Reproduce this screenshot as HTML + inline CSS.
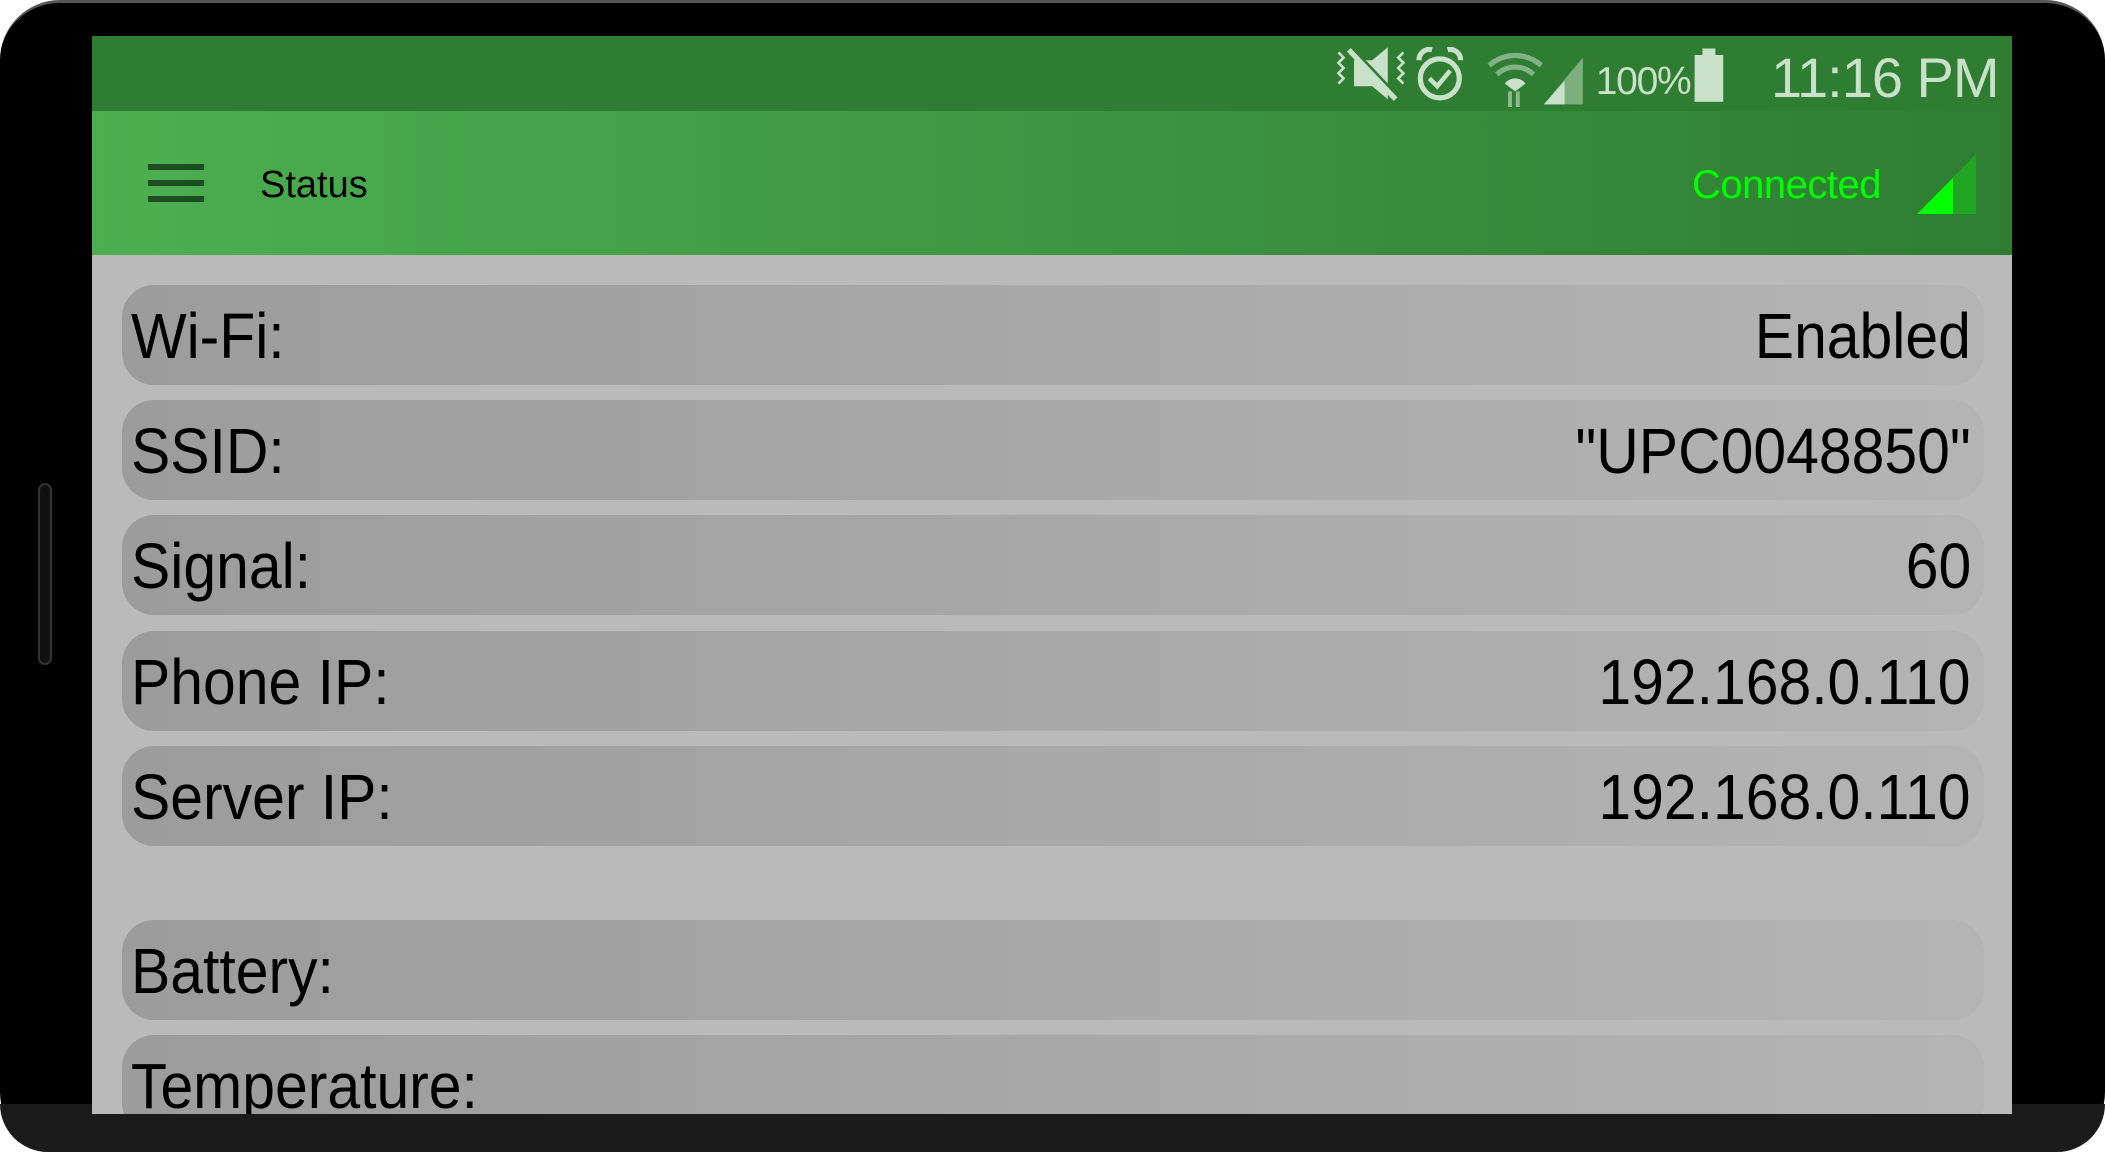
<!DOCTYPE html>
<html><head><meta charset="utf-8"><style>
*{margin:0;padding:0;box-sizing:border-box}
html,body{width:2105px;height:1152px;overflow:hidden;background:#fff}
body{font-family:"Liberation Sans",sans-serif;position:relative}
.phone{position:absolute;left:0;top:0;width:2105px;height:1152px;background:#000;border-radius:60px;border-top:3px solid #555}
.chin{position:absolute;left:0;top:1104px;width:2105px;height:48px;background:#1b1b1b;border-radius:0 0 60px 60px}
.btn{position:absolute;left:38px;top:483px;width:14px;height:182px;border:2px solid #333;border-radius:7px;background:#111}
.screen{position:absolute;left:92px;top:36px;width:1920px;height:1078px;background:#bababa;overflow:hidden}
.sb{position:absolute;left:0;top:0;width:1920px;height:75px;background:#2e7d32}
.ab{position:absolute;left:0;top:75px;width:1920px;height:144px;background:linear-gradient(90deg,#4caf50,#2f7d33)}
.ham{position:absolute;left:56px;top:53px;width:56px;height:38px}
.ham i{position:absolute;left:0;width:56px;height:6px;background:#1f4d22}
.title{position:absolute;left:168px;top:53px;font-size:38px;color:#000}
.conn{position:absolute;left:1600px;top:52px;font-size:40px;color:#00ff00;letter-spacing:-0.5px}
.row{position:absolute;left:30px;width:1862px;height:100px;border-radius:32px;background:linear-gradient(90deg,#9c9c9c,#b4b4b4)}
.row span{position:absolute;top:14px;font-size:64px;color:#000;white-space:nowrap;transform:scaleX(0.92)}
.row .l{left:9px;transform-origin:left center}.row .r{right:13px;transform-origin:right center}
.st{position:absolute;color:#c9e0c9}
</style></head><body>
<div class="phone"></div>
<div class="chin"></div>
<div class="btn"></div>
<div class="screen">
 <div class="sb">
  <svg class="st" style="left:1236px;top:6px" width="520" height="65" viewBox="0 0 400 50">
   <g fill="#c9e0c9" stroke="#c9e0c9">
    <path d="M20 14 L34 14 L46 4 L46 44 L34 34 L20 34 Z" stroke="none"/>
    <path d="M18 6 L54 44" stroke-width="5" stroke="#2e7d32"/>
    <path d="M16 6 L52 44" stroke-width="4"/>
    <path d="M8 8 l4 4 l-4 4 l4 4 l-4 4 l4 4 l-4 4" fill="none" stroke-width="2"/>
    <path d="M58 8 l-4 4 l4 4 l-4 4 l4 4 l-4 4 l4 4" fill="none" stroke-width="2"/>
    <circle cx="86" cy="28" r="15" fill="none" stroke-width="4"/>
    <path d="M78 28 l6 6 l10 -12" fill="none" stroke-width="3.5"/>
    <path d="M70 14 a8 8 0 0 1 10 -8 M102 14 a8 8 0 0 0 -10 -8" fill="none" stroke-width="4"/>
    <path d="M124 18 a30 30 0 0 1 40 0 M130 25 a20 20 0 0 1 28 0" fill="none" stroke-width="4" opacity=".55"/>
    <path d="M136 32 a10 10 0 0 1 16 0 L144 38 Z" stroke="none"/>
    <path d="M140 38 v12 M146 50 v-12" stroke-width="3" opacity=".6"/>
    <path d="M166 48 L196 12 L196 48 Z" stroke="none" opacity=".5"/>
    <path d="M166 48 L182 30 L182 48 Z" stroke="none"/>
   </g>
   <text x="206" y="40" font-size="30" fill="#c9e0c9" font-family="Liberation Sans" letter-spacing="-1">100%</text>
   <rect x="282" y="10" width="22" height="36" fill="#c9e0c9"/><rect x="288" y="5" width="10" height="6" fill="#c9e0c9"/>
  </svg>
  <div class="st" style="left:1679px;top:9px;font-size:56px;letter-spacing:-1px">11:16 PM</div>
 </div>
 <div class="ab">
  <div class="ham"><i style="top:0"></i><i style="top:16px"></i><i style="top:32px"></i></div>
  <div class="title">Status</div>
  <div class="conn">Connected</div>
  <svg style="position:absolute;left:1825px;top:43px" width="60" height="60" viewBox="0 0 60 60">
   <path d="M0 60 L59 0 L59 60 Z" fill="#22a522"/><path d="M0 60 L36 24 L36 60 Z" fill="#00ff00"/>
  </svg>
 </div>
 <div class="row" style="top:249px"><span class="l">Wi-Fi:</span><span class="r">Enabled</span></div>
 <div class="row" style="top:364px"><span class="l">SSID:</span><span class="r">"UPC0048850"</span></div>
 <div class="row" style="top:479px"><span class="l">Signal:</span><span class="r">60</span></div>
 <div class="row" style="top:595px"><span class="l">Phone IP:</span><span class="r">192.168.0.110</span></div>
 <div class="row" style="top:710px"><span class="l">Server IP:</span><span class="r">192.168.0.110</span></div>
 <div class="row" style="top:884px"><span class="l">Battery:</span></div>
 <div class="row" style="top:999px"><span class="l">Temperature:</span></div>
</div>
</body></html>
